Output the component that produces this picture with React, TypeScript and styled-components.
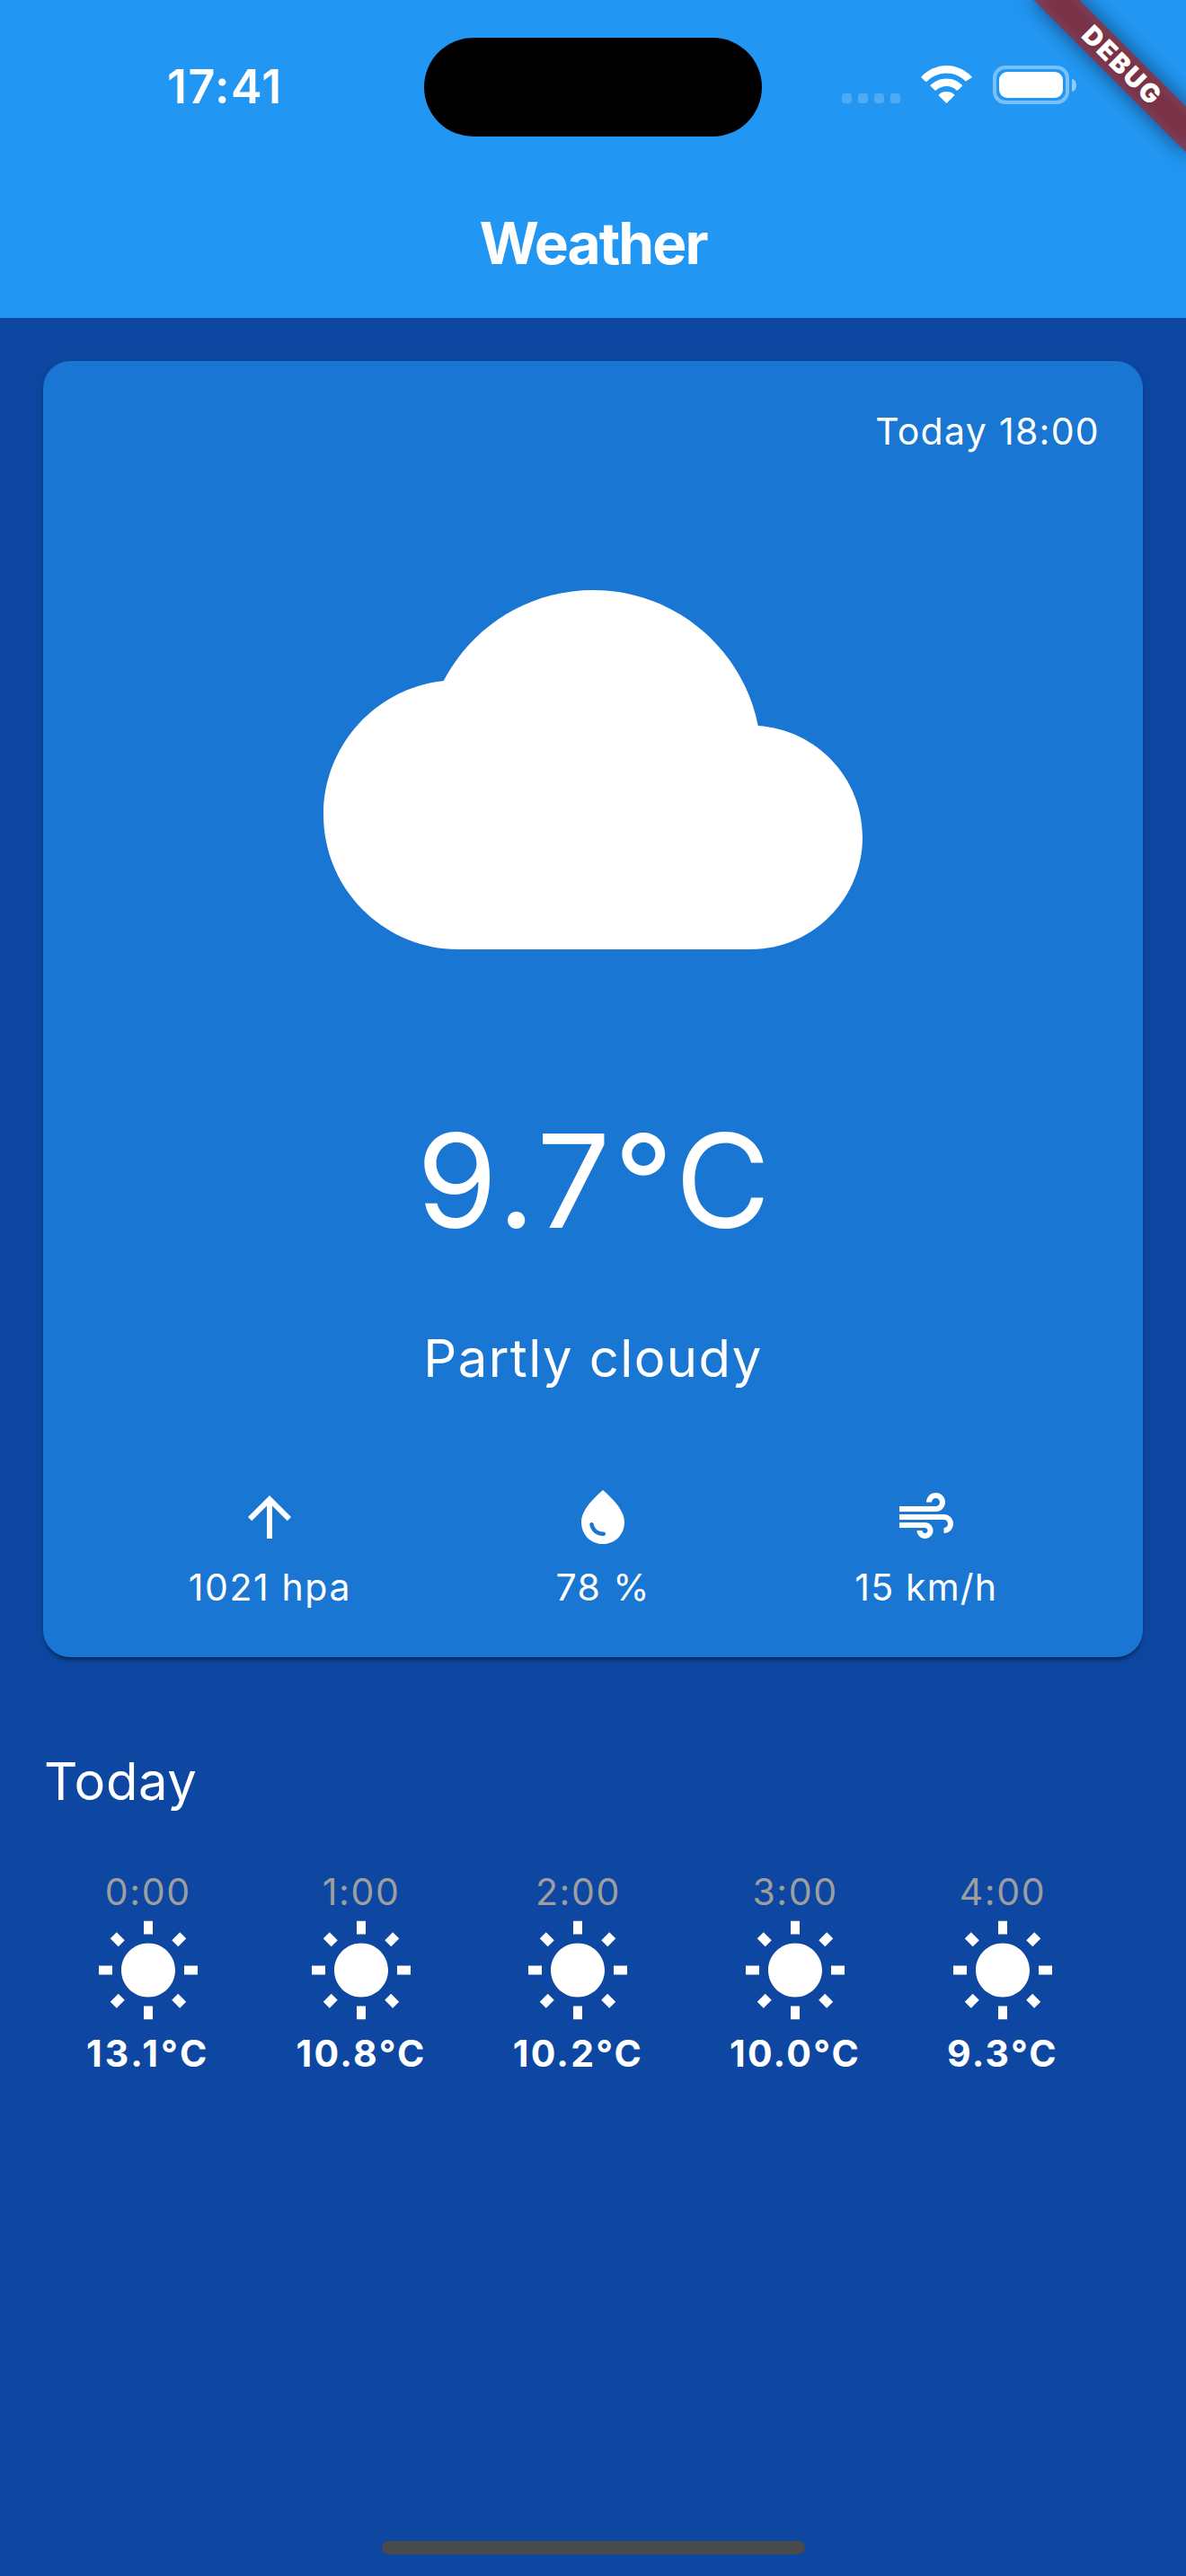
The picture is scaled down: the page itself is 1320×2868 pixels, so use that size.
import React from "react";
import styled, { createGlobalStyle } from "styled-components";

const Global = createGlobalStyle`
  * { box-sizing: border-box; }
  body { margin: 0; background: #0d47a1; }
`;

const Screen = styled.div`
  position: relative;
  width: 1320px;
  height: 2868px;
  overflow: hidden;
  display: flex;
  flex-direction: column;
  background: #0d47a1;
  color: #fff;
  font-family: Inter, Roboto, "Liberation Sans", sans-serif;
`;

const Header = styled.header`
  height: 354px;
  background: #2196f3;
`;

const StatusBar = styled.div`
  height: 186px;
  padding: 42px 122px 0 186px;
  display: grid;
  grid-template-columns: 286px 376px 1fr;
`;

const Clock = styled.span`
  font-size: 52px;
  font-weight: 600;
  line-height: 63px;
  padding-top: 23px;
  letter-spacing: 1.4px;
`;

const Island = styled.div`
  height: 110px;
  border-radius: 55px;
  background: #000;
`;

const Indicators = styled.div`
  display: flex;
  justify-content: flex-end;
  align-items: flex-start;
  padding-top: 31px;
`;

const Signal = styled.div`
  display: flex;
  gap: 7px;
  padding-top: 31px;
  margin-right: 23px;
`;

const SignalDot = styled.i`
  width: 11px;
  height: 11px;
  border-radius: 3px;
  background: rgba(255, 255, 255, 0.2);
`;

const BatteryShell = styled.div`
  width: 85px;
  height: 43px;
  margin-left: 23px;
  border: 4px solid rgba(255, 255, 255, 0.4);
  border-radius: 14px;
  padding: 3px;
`;

const BatteryLevel = styled.div`
  width: 71px;
  height: 29px;
  border-radius: 9px;
  background: #fff;
`;

const BatteryCap = styled.div`
  width: 5px;
  height: 14px;
  margin: 15px 0 0 3px;
  border-radius: 0 5px 5px 0 / 0 7px 7px 0;
  background: rgba(255, 255, 255, 0.5);
`;

const Title = styled.h1`
  margin: 0;
  padding-top: 46px;
  font-size: 64px;
  font-weight: 700;
  line-height: 78px;
  letter-spacing: -1.95px;
  text-align: center;
`;

const RibbonCorner = styled.div`
  position: absolute;
  top: 0;
  right: 0;
  width: 240px;
  height: 240px;
  overflow: hidden;
`;

const Ribbon = styled.div`
  position: absolute;
  left: 120px;
  top: 84px;
  width: 240px;
  height: 36px;
  transform-origin: 120px -84px;
  transform: rotate(45deg);
  display: flex;
  align-items: center;
  justify-content: center;

  &::before,
  &::after {
    content: "";
    position: absolute;
    inset: 0;
  }
  &::before {
    background: rgba(0, 0, 0, 0.5);
    filter: blur(12px);
  }
  &::after {
    background: rgba(183, 28, 28, 0.627);
  }
`;

const RibbonText = styled.span`
  position: relative;
  z-index: 1;
  padding-left: 3px;
  font-size: 29px;
  font-weight: 900;
  line-height: 36px;
  letter-spacing: 2.2px;
`;

const Card = styled.section`
  margin: 48px 48px 0;
  height: 1443px;
  padding: 48px;
  border-radius: 30px;
  background: #1976d2;
  box-shadow: 0 6px 3px -3px rgba(0, 0, 0, 0.2), 0 3px 3px rgba(0, 0, 0, 0.14),
    0 3px 9px rgba(0, 0, 0, 0.12);
  display: flex;
  flex-direction: column;
  align-items: center;
`;

const Body = styled.span<{ $spacing?: number }>`
  font-size: 41px;
  font-weight: 400;
  line-height: 60px;
  letter-spacing: ${(p) => p.$spacing ?? 1.6}px;
  white-space: nowrap;
`;

const ForecastTime = styled(Body)`
  align-self: flex-end;
`;

const Temperature = styled.div`
  margin-top: 38px;
  padding-left: 5px;
  font-size: 145px;
  font-weight: 400;
  line-height: 240px;
  letter-spacing: 3.8px;
`;

const Summary = styled.div`
  margin-top: 37px;
  font-size: 58px;
  font-weight: 400;
  line-height: 80px;
  letter-spacing: 1.4px;
`;

const Metrics = styled.div`
  align-self: stretch;
  margin-top: 101px;
  display: flex;
  justify-content: space-around;
`;

const Metric = styled.div`
  display: flex;
  flex-direction: column;
  align-items: center;
  gap: 12px;
`;

const Glyph = styled.svg<{ $size: number }>`
  display: block;
  flex: none;
  width: ${(p) => p.$size}px;
  height: ${(p) => p.$size}px;
  fill: #fff;
`;

const CloudGlyph = styled(Glyph)`
  margin-top: 47px;
`;

const SectionTitle = styled.h2`
  margin: 98px 0 0 49px;
  font-size: 58px;
  font-weight: 400;
  line-height: 80px;
  letter-spacing: 0.6px;
`;

const Hours = styled.div`
  display: flex;
  gap: 96px;
  padding: 53px 0 0 96px;
`;

const Hour = styled.div`
  display: flex;
  flex-direction: column;
  align-items: center;
`;

const HourLabel = styled(Body)`
  color: #9e9e9e;
`;

const HourTemp = styled(Body)`
  font-weight: 700;
`;

const HomeBar = styled.div`
  width: 471px;
  height: 15px;
  margin: auto auto 24px;
  border-radius: 8px;
  background: #4a4a4a;
`;

const icons = {
  cloud:
    "M19.35 10.04C18.67 6.59 15.64 4 12 4 9.11 4 6.6 5.64 5.35 8.04 2.34 8.36 0 10.91 0 14c0 3.31 2.69 6 6 6h13c2.76 0 5-2.24 5-5 0-2.64-2.05-4.78-4.65-4.96z",
  arrow: "M4 12l1.41 1.41L11 7.83V20h2V7.83l5.58 5.59L20 12l-8-8-8 8z",
  drop: "M12 2c-5.33 4.55-8 8.48-8 11.8 0 4.98 3.8 8.2 8 8.2s8-3.22 8-8.2c0-3.32-2.67-7.25-8-11.8zM7.83 14c.37 0 .67.26.74.62.41 2.22 2.28 2.98 3.64 2.87.43-.02.79.32.79.75 0 .4-.32.73-.72.75-2.13.13-4.62-1.09-5.19-4.12-.08-.45.28-.87.74-.87z",
  air: "M14.5 17c0 1.65-1.35 3-3 3s-3-1.35-3-3h2c0 .55.45 1 1 1s1-.45 1-1-.45-1-1-1H2v-2h9.5c1.65 0 3 1.35 3 3zM19 6.5C19 4.57 17.43 3 15.5 3S12 4.57 12 6.5h2c0-.83.67-1.5 1.5-1.5s1.5.67 1.5 1.5S16.33 8 15.5 8H2v2h13.5c1.93 0 3.5-1.57 3.5-3.5zm-.5 4.5H2v2h16.5c.83 0 1.5.67 1.5 1.5s-.67 1.5-1.5 1.5v2c1.93 0 3.5-1.57 3.5-3.5S20.43 11 18.5 11z",
  sun: "M6.76 4.84l-1.8-1.79-1.41 1.41 1.79 1.79 1.42-1.41zM4 10.5H1v2h3v-2zm9-9.95h-2V3.5h2V.55zm7.45 3.91l-1.41-1.41-1.79 1.79 1.41 1.41 1.79-1.79zm-3.21 13.7l1.79 1.8 1.41-1.41-1.8-1.79-1.4 1.4zM20 10.5v2h3v-2h-3zm-8-5c-3.31 0-6 2.69-6 6s2.69 6 6 6 6-2.69 6-6-2.69-6-6-6zm-1 16.95h2V19.5h-2v2.95zm-7.45-3.91l1.41 1.41 1.79-1.8-1.41-1.41-1.79 1.8z",
};

const metrics = [
  { icon: icons.arrow, value: "1021 hpa", spacing: 1.6 },
  { icon: icons.drop, value: "78 %", spacing: 1.4 },
  { icon: icons.air, value: "15 km/h", spacing: 1.2 },
];

const hours = [
  { time: "0:00", temp: "13.1°C", spacing: 3 },
  { time: "1:00", temp: "10.8°C", spacing: 2.3 },
  { time: "2:00", temp: "10.2°C", spacing: 2.2 },
  { time: "3:00", temp: "10.0°C", spacing: 2.2 },
  { time: "4:00", temp: "9.3°C", spacing: 2.2 },
];

function Wifi() {
  return (
    <svg width="57" height="42" viewBox="0 0 57 42" fill="#fff">
      <path d="M28.5 8.6c8 0 15.3 3.1 20.7 8.5.4.4 1 .4 1.4 0l5.8-3.7c.3-.4.3-.9 0-1.2C49.2 4.7 39.3 0 28.5 0S7.8 4.7.6 12.200c-.3.3-.3.9 0 1.2l4.5 4.4c.4.4 1 .4 1.4 0C12.5 12 20.2 8.6 28.5 8.6z" />
      <path d="M28.5 23c4.2 0 8.1 1.6 11.1 4.4.4.4 1 .4 1.4 0l4.7-4.4c.4-.4.4-1 0-1.4C41.5 17.2 35.5 14.4 28.5 14.4S15.5 17.2 10.8 21.6c-.4.4-.4 1 0 1.4l4.7 4.4c.4.4 1 .3 1.4 0 3-2.800 7.4-4.4 11.6-4.4z" />
      <path d="M37.1 32.2c.4.4.4.9 0 1.3l-8 8c-.3.4-.9.4-1.2 0l-8-8c-.4-.4-.4-.9 0-1.3 2.3-2 5.3-3.2 8.6-3.2s6.3 1.2 8.6 3.2z" />
    </svg>
  );
}

export default function App() {
  return (
    <Screen>
      <Global />
      <Header>
        <StatusBar>
          <Clock>17:41</Clock>
          <Island />
          <Indicators>
            <Signal>
              <SignalDot />
              <SignalDot />
              <SignalDot />
              <SignalDot />
            </Signal>
            <Wifi />
            <BatteryShell>
              <BatteryLevel />
            </BatteryShell>
            <BatteryCap />
          </Indicators>
        </StatusBar>
        <Title>Weather</Title>
      </Header>

      <Card>
        <ForecastTime $spacing={1.3}>Today 18:00</ForecastTime>
        <CloudGlyph $size={600} viewBox="0 0 24 24">
          <path d={icons.cloud} />
        </CloudGlyph>
        <Temperature>9.7°C</Temperature>
        <Summary>Partly cloudy</Summary>
        <Metrics>
          {metrics.map((m) => (
            <Metric key={m.value}>
              <Glyph $size={72} viewBox="0 0 24 24">
                <path d={m.icon} />
              </Glyph>
              <Body $spacing={m.spacing}>{m.value}</Body>
            </Metric>
          ))}
        </Metrics>
      </Card>

      <SectionTitle>Today</SectionTitle>
      <Hours>
        {hours.map((h) => (
          <Hour key={h.time}>
            <HourLabel>{h.time}</HourLabel>
            <Glyph $size={120} viewBox="0 0 24 24">
              <path d={icons.sun} />
            </Glyph>
            <HourTemp $spacing={h.spacing}>{h.temp}</HourTemp>
          </Hour>
        ))}
      </Hours>
      <HomeBar />

      <RibbonCorner>
        <Ribbon>
          <RibbonText>DEBUG</RibbonText>
        </Ribbon>
      </RibbonCorner>
    </Screen>
  );
}
